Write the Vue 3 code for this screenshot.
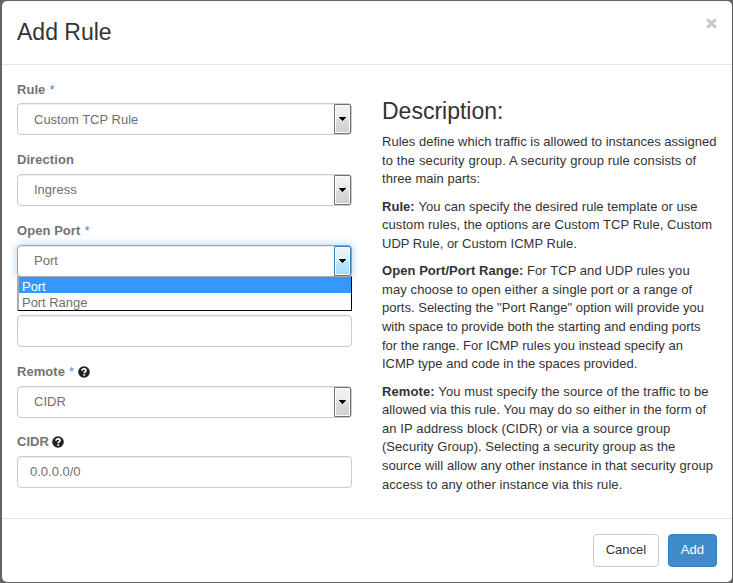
<script setup>
import { ref } from 'vue'

const fields = ref([
  { label: 'Rule', required: true, type: 'select', value: 'Custom TCP Rule' },
  { label: 'Direction', type: 'select', value: 'Ingress' },
  { label: 'Open Port', required: true, type: 'select', value: 'Port', open: true, options: ['Port', 'Port Range'] },
  { label: '', type: 'text', value: '' },
  { label: 'Remote', required: true, help: true, type: 'select', value: 'CIDR' },
  { label: 'CIDR', help: true, type: 'text', value: '0.0.0.0/0' },
])

// Each line carries its text and its tracking in pixels.
const paragraphs = [
  {
    lines: [
      ['Rules define which traffic is allowed to instances assigned', 0.015],
      ['to the security group. A security group rule consists of', 0.115],
      ['three main parts:', 0.035],
    ],
  },
  {
    term: 'Rule:',
    lines: [
      ['You can specify the desired rule template or use', 0.045],
      ['custom rules, the options are Custom TCP Rule, Custom', 0.065],
      ['UDP Rule, or Custom ICMP Rule.', 0.01],
    ],
  },
  {
    term: 'Open Port/Port Range:',
    lines: [
      ['For TCP and UDP rules you', 0.06],
      ['may choose to open either a single port or a range of', 0.1],
      ['ports. Selecting the "Port Range" option will provide you', 0.01],
      ['with space to provide both the starting and ending ports', -0.015],
      ['for the range. For ICMP rules you instead specify an', 0.01],
      ['ICMP type and code in the spaces provided.', 0.01],
    ],
  },
  {
    term: 'Remote:',
    lines: [
      ['You must specify the source of the traffic to be', 0.09],
      ['allowed via this rule. You may do so either in the form of', 0.045],
      ['an IP address block (CIDR) or via a source group', 0.095],
      ['(Security Group). Selecting a security group as the', 0.04],
      ['source will allow any other instance in that security group', 0.05],
      ['access to any other instance via this rule.', 0.06],
    ],
  },
]
</script>

<template>
  <div class="backdrop">
    <div class="modal">
      <header class="head">
        <h3>Add Rule</h3>
        <svg class="close" viewBox="0 0 10 10"><path d="M1.2 1.2 8.8 8.8M8.8 1.2 1.2 8.8" /></svg>
      </header>
      <main class="body">
        <form class="col">
          <div v-for="(f, i) in fields" :key="i" class="field">
            <div class="label">
              <span v-if="f.label">{{ f.label }}</span>
              <span v-if="f.required" class="star">*</span>
              <svg v-if="f.help" class="help" viewBox="0 0 12 12">
                <circle cx="6" cy="6" r="5.8" />
                <path d="M4 4.7C4.1 3.3 5 2.9 6 2.9c1.2 0 2 .6 2 1.6C8 5.8 6.2 5.7 6.2 7.2" />
                <path d="M5.3 9h1.8" />
              </svg>
            </div>
            <div class="control" :class="[f.type, { open: f.open }]">
              <span>{{ f.value }}</span>
              <div v-if="f.type === 'select'" class="arrow">
                <svg viewBox="0 0 7 4" shape-rendering="crispEdges"><path d="M0 0h7v1H6v1H5v1H4v1H3V3H2V2H1V1H0z" /></svg>
              </div>
              <div v-if="f.open" class="menu">
                <div v-for="(o, n) in f.options" :key="o" class="option" :class="{ active: n === 0 }">{{ o }}</div>
              </div>
            </div>
          </div>
        </form>
        <section class="col desc">
          <h3>Description:</h3>
          <p v-for="(p, i) in paragraphs" :key="i">
            <span v-for="([text, track], n) in p.lines" :key="n" class="line" :style="{ letterSpacing: track + 'px' }"><template v-if="p.term && n === 0"><b>{{ p.term }}</b>&nbsp;</template>{{ text }}</span>
          </p>
        </section>
      </main>
      <footer class="foot">
        <button class="btn">Cancel</button>
        <button class="btn primary">Add</button>
      </footer>
    </div>
  </div>
</template>

<style>
body { margin: 0; background: #636363; }
</style>

<style scoped>
* { box-sizing: border-box; }
.backdrop {
  height: 583px;
  padding: 1px 1px 1px 2px;
  background: #636363;
  font: 13px/18.57px "Liberation Sans", Arial, sans-serif;
  color: #333;
  overflow: hidden;
}
.modal { height: 581px; background: #fff; border-radius: 5px; display: flex; flex-direction: column; }
h3 { font-size: 23px; line-height: 25px; font-weight: 400; margin: 0; }
.head { height: 64px; flex: none; padding: 19px 15px 0; border-bottom: 1px solid #e5e5e5; display: flex; justify-content: space-between; }
.close { width: 11px; height: 11px; margin: -2px 0 0; fill: none; stroke: #c8c8c8; stroke-width: 2.8; }
.body { height: 453px; flex: none; padding: 14.9px 15px 0; display: flex; gap: 30px; }
.col { width: 335px; flex: none; }
.field { margin-bottom: 15px; }
.label { height: 23.57px; padding-bottom: 4px; font-weight: 700; color: #737373; display: flex; align-items: center; gap: 4px; white-space: nowrap; letter-spacing: .06px; }
.field:first-child .label { padding-bottom: 3px; }
.star { color: #428bca; font-weight: 400; }
.help { width: 12px; height: 12px; margin-left: -1px; fill: #222; }
.star + .help { margin-left: 0; }
.help path { fill: none; stroke: #fff; stroke-width: 1.6; }
.control {
  position: relative;
  height: 32px;
  border: 1px solid #ccc;
  border-radius: 4px;
  box-shadow: inset 0 1px 1px rgba(0, 0, 0, .075);
  display: flex;
  align-items: center;
  justify-content: space-between;
  padding-left: 12px;
  color: #707070;
}
.control > span { padding-top: 1px; }
.select { padding-left: 16px; }
.open { border-color: #66afe9; box-shadow: inset 0 1px 1px rgba(0, 0, 0, .075), 0 0 8px rgba(102, 175, 233, .6); }
.arrow {
  width: 17px;
  height: 30px;
  border: 1px solid #707070;
  border-radius: 0 2px 2px 0;
  box-shadow: inset 0 0 0 1px #fcfcfc;
  background: linear-gradient(#f2f2f2, #ebebeb 50%, #dddddd 50%, #cfcfcf);
  display: flex;
  align-items: center;
  justify-content: center;
}
.arrow svg { width: 7px; height: 4px; fill: #000; }
.open .arrow { border-color: #3c7fb1; background: linear-gradient(#eaf6fd, #d9f0fc 50%, #bee6fd 50%, #a7d9f5); }
.menu {
  position: absolute;
  z-index: 2;
  left: -1px;
  top: 30px;
  width: 335px;
  height: 35px;
  border: 1px solid #000;
  border-top-color: #aaa;
  border-left: 2px solid #aaa;
  background: #fff;
}
.option { height: 16px; line-height: 19px; padding-left: 3px; letter-spacing: -.04px; }
.active { background: #3399ff; color: #fff; }
.desc { padding-top: 19.1px; }
.desc h3 { margin-bottom: 9px; }
p { margin: 0 0 9px; }
.line { display: block; white-space: nowrap; }
.foot { flex: 1; border-top: 1px solid #e5e5e5; padding: 15px; display: flex; justify-content: flex-end; gap: 9px; }
.btn { height: 33px; padding: 0 11.7px; font: inherit; color: #333; background: #fff; border: 1px solid #ccc; border-radius: 4px; }
.primary { padding: 0 12px; background: #428bca; border-color: #357ebd; color: #fff; }
</style>
